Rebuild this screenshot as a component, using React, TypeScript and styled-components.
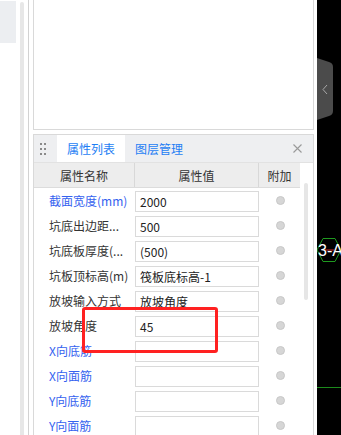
import React from "react";
import styled, { createGlobalStyle } from "styled-components";

const Global = createGlobalStyle`
  html, body { margin: 0; padding: 0; background: #ffffff; }
  body { font-family: "Noto Sans CJK SC", "Noto Sans", sans-serif; font-size: 12px; color: #333; }
  * { box-sizing: border-box; }
`;

const Page = styled.div`
  display: flex;
  height: 435px;
  width: 341px;
  overflow: hidden;
  position: relative;
  background: #fff;
`;

const LeftRail = styled.div`
  display: flex;
  align-items: flex-start;
  gap: 4px;
  width: 28px;
  height: 100%;
`;

const NavTab = styled.div`
  width: 16px;
  height: 42px;
  margin-top: 1px;
  background: #eceef1;
`;

const RailScroll = styled.div`
  width: 4px;
  height: 100%;
  margin-top: 2px;
  border-radius: 2px;
  background: #e7e7e7;
`;

const Divider = styled.div`
  width: 1px;
  height: 100%;
  background: #d2d2d2;
  margin-right: 4px;
`;

const Main = styled.div`
  width: 281px;
  display: flex;
  flex-direction: column;
  gap: 4px;
`;

const TopPanel = styled.div`
  height: 130px;
  flex: none;
  border: 1px solid #d9d9d9;
  border-top: none;
  background: #fff;
`;

const BottomPanel = styled.div`
  flex: 1;
  border: 1px solid #d9d9d9;
  border-bottom: none;
  display: flex;
  flex-direction: column;
  background: #fff;
`;

const TabBar = styled.div`
  height: 28px;
  flex: none;
  display: flex;
  align-items: stretch;
  background: #eeeff1;
  border-bottom: 1px solid #e2e2e2;
`;

const Grip = styled.div`
  width: 23px;
  display: grid;
  grid-template-columns: 2px 2px;
  grid-auto-rows: 2px;
  column-gap: 2px;
  row-gap: 3px;
  align-content: center;
  padding-left: 6px;
  span { background: #8a8a8a; }
`;

const Tab = styled.div<{ $active?: boolean }>`
  padding: 0 10px;
  display: flex;
  align-items: center;
  color: #1e7ef4;
  font-size: 12px;
  background: ${(p) => (p.$active ? "#ffffff" : "transparent")};
`;

const Spacer = styled.div`
  flex: 1;
`;

const CloseBtn = styled.div`
  width: 30px;
  display: flex;
  align-items: center;
  justify-content: center;
  padding-right: 2px;
`;

const TableWrap = styled.div`
  flex: 1;
  display: flex;
`;

const Table = styled.div`
  width: 266px;
  display: flex;
  flex-direction: column;
`;

const Cols = "101px 124px 41px";

const HeadRow = styled.div`
  display: grid;
  grid-template-columns: ${Cols};
  height: 25px;
  background: #ededed;
  border-bottom: 1px solid #dcdcdc;
`;

const HeadCell = styled.div<{ $last?: boolean }>`
  display: flex;
  align-items: center;
  justify-content: center;
  color: #333;
  font-size: 12px;
  border-right: ${(p) => (p.$last ? "none" : "1px solid #d8d8d8")};
`;

const Row = styled.div`
  display: grid;
  grid-template-columns: ${Cols};
  height: 25px;
  align-items: center;
`;

const Label = styled.div<{ $link?: boolean }>`
  padding-left: 15px;
  color: ${(p) => (p.$link ? "#3562ef" : "#333")};
  white-space: nowrap;
  font-size: 12px;
`;

const ValueBox = styled.div`
  height: 21px;
  margin-top: 1px;
  border: 1px solid #dadada;
  padding-left: 4px;
  display: flex;
  align-items: center;
  color: #222;
  font-size: 12px;
  white-space: nowrap;
`;

const DotCell = styled.div`
  display: flex;
  justify-content: center;
  padding-left: 1px;
`;

const Dot = styled.span`
  width: 9px;
  height: 9px;
  border-radius: 50%;
  background: #d6d6d6;
  border: 1px solid #c8c8c8;
`;

const ScrollCol = styled.div`
  width: 13px;
  padding-left: 4px;
  padding-top: 20px;
`;

const Thumb = styled.div`
  width: 4px;
  height: 117px;
  border-radius: 2px;
  background: #e6e6e6;
`;

const Gap = styled.div`
  width: 3px;
`;

const Canvas = styled.div`
  flex: 1;
  background: #000;
  position: relative;
  overflow: hidden;
`;

const Overlay = styled.svg`
  position: absolute;
  left: 0;
  top: 0;
`;

const Highlight = styled.div`
  position: absolute;
  left: 82px;
  top: 307px;
  width: 136px;
  height: 46px;
  border: 3px solid #ff2121;
  border-radius: 3px;
  pointer-events: none;
`;

type RowData = { name: string; link?: boolean; value: string };

const rows: RowData[] = [
  { name: "截面宽度(mm)", link: true, value: "2000" },
  { name: "坑底出边距...", value: "500" },
  { name: "坑底板厚度(...", value: "(500)" },
  { name: "坑板顶标高(m)", value: "筏板底标高-1" },
  { name: "放坡输入方式", value: "放坡角度" },
  { name: "放坡角度", value: "45" },
  { name: "X向底筋", link: true, value: "" },
  { name: "X向面筋", link: true, value: "" },
  { name: "Y向底筋", link: true, value: "" },
  { name: "Y向面筋", link: true, value: "" },
];

export default function App() {
  return (
    <>
      <Global />
      <Page>
        <LeftRail>
          <NavTab />
          <RailScroll />
        </LeftRail>
        <Divider />
        <Main>
          <TopPanel />
          <BottomPanel>
            <TabBar>
              <Grip>
                <span /><span /><span /><span /><span /><span />
              </Grip>
              <Tab $active>属性列表</Tab>
              <Tab>图层管理</Tab>
              <Spacer />
              <CloseBtn>
                <svg width="9" height="9" viewBox="0 0 9 9">
                  <path d="M0.5 0.5 L8.5 8.5 M8.5 0.5 L0.5 8.5" stroke="#9a9a9a" strokeWidth="1.1" />
                </svg>
              </CloseBtn>
            </TabBar>
            <TableWrap>
              <Table>
                <HeadRow>
                  <HeadCell>属性名称</HeadCell>
                  <HeadCell>属性值</HeadCell>
                  <HeadCell $last>附加</HeadCell>
                </HeadRow>
                {rows.map((r, i) => (
                  <Row key={i}>
                    <Label $link={r.link}>{r.name}</Label>
                    <ValueBox>{r.value}</ValueBox>
                    <DotCell>
                      <Dot />
                    </DotCell>
                  </Row>
                ))}
              </Table>
              <ScrollCol>
                <Thumb />
              </ScrollCol>
            </TableWrap>
          </BottomPanel>
        </Main>
        <Gap />
        <Canvas>
          <Overlay width="24" height="435" viewBox="0 0 24 435">
            <path d="M0 58 L12 62 Q16 63 16 67 L16 111 Q16 115 12 116 L0 120 Z" fill="#4b4b4b" />
            <path d="M10 85 L6 89.5 L10 94" stroke="#a8a8a8" strokeWidth="1" fill="none" />
            <polygon points="0,250 6,238.5 18,238.5 24,250 18,261.5 6,261.5" fill="none" stroke="#1f9a1f" strokeWidth="1" />
            <line x1="7" y1="250" x2="17" y2="250" stroke="#8a1a1a" strokeWidth="1.5" />
            <text x="1" y="256" fill="#ffffff" fontFamily="Liberation Sans, sans-serif" fontSize="16">3-A</text>
            <line x1="0" y1="387.5" x2="24" y2="387.5" stroke="#1c8a1c" strokeWidth="1" />
          </Overlay>
        </Canvas>
        <Highlight />
      </Page>
    </>
  );
}
